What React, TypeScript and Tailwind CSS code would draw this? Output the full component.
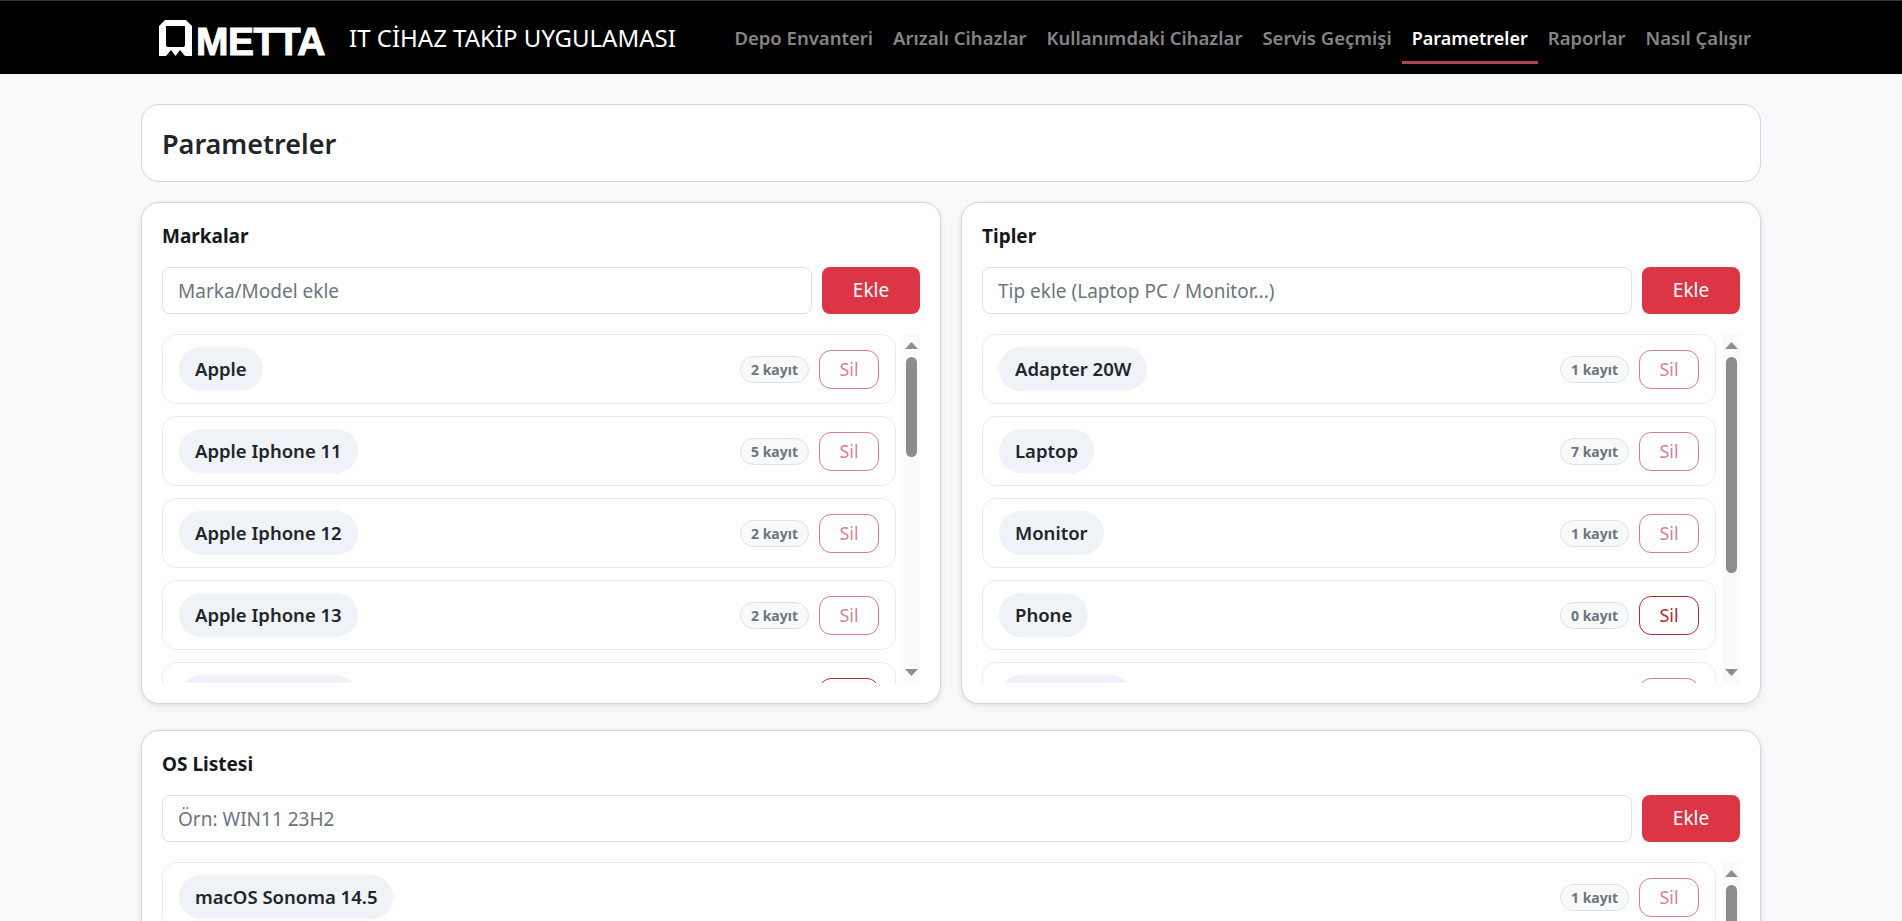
import React from 'react';

type Item = { name: string; count: number };

const brands: Item[] = [
    { name: 'Apple', count: 2 },
    { name: 'Apple Iphone 11', count: 5 },
    { name: 'Apple Iphone 12', count: 2 },
    { name: 'Apple Iphone 13', count: 2 },
    { name: 'Apple Iphone 14', count: 0 },
];

const types: Item[] = [
    { name: 'Adapter 20W', count: 1 },
    { name: 'Laptop', count: 7 },
    { name: 'Monitor', count: 1 },
    { name: 'Phone', count: 0 },
    { name: 'Powerbank', count: 1 },
];

const osList: Item[] = [{ name: 'macOS Sonoma 14.5', count: 1 }];

const navLinks = ['Depo Envanteri', 'Arızalı Cihazlar', 'Kullanımdaki Cihazlar', 'Servis Geçmişi', 'Parametreler', 'Raporlar', 'Nasıl Çalışır'];

const Logo = () => (
    <div className="flex items-end gap-[4px] h-[36px] w-[165px] text-white">
        <svg width="33" height="36" viewBox="0 0 33 36" className="shrink-0">
            <path
                fill="#fff"
                fillRule="evenodd"
                d="M6 0H27L33 6V36H26L21 30L16.5 36L12 30L7 36H0V6ZM7 6V25Q7 27 9 27H24Q26 27 26 25V6Z"
            />
        </svg>
        <span className="font-['Liberation_Sans',sans-serif] font-bold text-[39px] leading-[28px] tracking-[-0.5px] [-webkit-text-stroke:1px_white]">
            METTA
        </span>
    </div>
);

const Scrollbar = ({ thumb }: { thumb: string }) => (
    <div className="w-[17px] shrink-0 flex flex-col items-center bg-[#fafafa]">
        <svg width="13" height="7" viewBox="0 0 13 7" className="mt-[8px] shrink-0">
            <path d="M6.5 0L13 7H0Z" fill="#8f8f8f" />
        </svg>
        <div className={`w-[11px] mt-[8px] rounded-full bg-[#8c8c8c] ${thumb}`} />
        <div className="flex-1" />
        <svg width="13" height="7" viewBox="0 0 13 7" className="mb-[7px] shrink-0">
            <path d="M6.5 7L13 0H0Z" fill="#8f8f8f" />
        </svg>
    </div>
);

const Row = ({ item }: { item: Item }) => (
    <div className="h-[70px] shrink-0 flex items-center justify-between px-4 border border-[#e9ecef] rounded-[14px] bg-white">
        <span className="h-[44px] flex items-center px-4 rounded-full bg-[#eff2f6] text-[18.5px] font-semibold text-[#212529]">
            {item.name}
        </span>
        <div className="flex items-center gap-[10px]">
            <span className="h-[27px] flex items-center px-[10px] rounded-full border border-[#dee2e6] bg-[#f8f9fa] text-[14px] font-bold text-[#6c757d]">
                {item.count} kayıt
            </span>
            <button
                className={
                    item.count === 0
                        ? 'w-[60px] h-[39px] rounded-[12px] border border-[#b02a37] text-[18px] text-[#b02a37]'
                        : 'w-[60px] h-[39px] rounded-[12px] border border-[#b9283e]/60 text-[18px] text-[#b9283e]/60'
                }
            >
                Sil
            </button>
        </div>
    </div>
);

const ParamCard = ({ title, placeholder, items, thumb }: { title: string; placeholder: string; items: Item[]; thumb: string }) => (
    <section className="bg-white border border-[#d3d5d8] rounded-[18px] shadow-[0_2px_6px_rgba(0,0,0,0.1)] px-5 pt-[19px] pb-5">
        <h3 className="h-[28px] mb-[17px] text-[19px] leading-[28px] font-bold text-[#16191c]">{title}</h3>
        <div className="flex gap-[10px] mb-5">
            <input
                placeholder={placeholder}
                className="flex-1 min-w-0 h-[47px] px-[15px] rounded-[8px] border border-[#dee2e6] bg-white text-[19px] placeholder:text-[#6c757d] outline-none"
            />
            <button className="w-[98px] h-[47px] rounded-[8px] bg-[#dc3545] text-white text-[19px]">Ekle</button>
        </div>
        <div className="flex h-[349px] overflow-hidden">
            <div className="flex-1 min-w-0 pr-[7px] flex flex-col gap-3 overflow-hidden">
                {items.map((item) => (
                    <Row key={item.name} item={item} />
                ))}
            </div>
            <Scrollbar thumb={thumb} />
        </div>
    </section>
);

export default function App() {
    return (
        <div className="h-screen overflow-hidden bg-[#f8f9fa] font-['Noto_Sans',sans-serif] text-[#212529]">
            <header className="h-[74px] bg-black border-t border-[#333]">
                <div className="w-[1620px] mx-auto h-full flex items-center justify-between pl-[18px]">
                    <div className="flex items-center gap-[25px]">
                        <Logo />
                        <span className="text-[24px] text-white">IT CİHAZ TAKİP UYGULAMASI</span>
                    </div>
                    <nav className="flex h-full items-center">
                        {navLinks.map((link) => (
                            <a
                                key={link}
                                className={
                                    link === 'Parametreler'
                                        ? 'h-[49px] mt-[4px] flex items-center px-[10px] border-b-[3px] border-[#b0444e] text-[18px] font-semibold text-white'
                                        : 'h-[49px] mt-[4px] flex items-center px-[10px] border-b-[3px] border-transparent text-[18.5px] font-semibold text-[#858585]'
                                }
                            >
                                {link}
                            </a>
                        ))}
                    </nav>
                </div>
            </header>

            <main className="w-[1620px] mx-auto pt-[30px]">
                <div className="h-[78px] flex items-center px-5 mb-5 bg-white border border-[#d3d5d8] rounded-[18px]">
                    <h1 className="mt-[2px] text-[27px] font-semibold text-[#212529]">Parametreler</h1>
                </div>
                <div className="grid grid-cols-2 gap-5 mb-[26px]">
                    <ParamCard title="Markalar" placeholder="Marka/Model ekle" items={brands} thumb="h-[100px]" />
                    <ParamCard title="Tipler" placeholder="Tip ekle (Laptop PC / Monitor...)" items={types} thumb="h-[216px]" />
                </div>
                <ParamCard title="OS Listesi" placeholder="Örn: WIN11 23H2" items={osList} thumb="h-[216px]" />
            </main>
        </div>
    );
}
